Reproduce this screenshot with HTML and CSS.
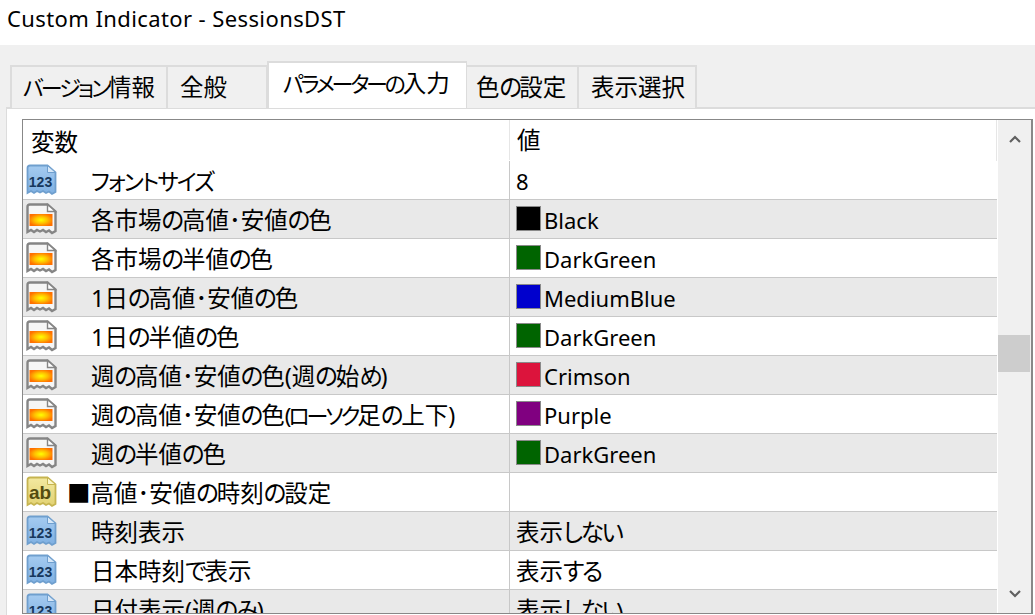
FILE: index.html
```html
<!DOCTYPE html>
<html lang="ja">
<head>
<meta charset="utf-8">
<title>Custom Indicator - SessionsDST</title>
<link rel="stylesheet" href="styles.css">
</head>
<body>
<svg class="defs" width="0" height="0" aria-hidden="true">
  <defs>
    <path id="doc" d="M2.5 4 Q2.5 1.5 5 1.5 H22.5 L30.5 8.5 V28 L27 30 L24 27.5 L21 29 L18 27 L15 28.5 L12 27 L9 29 L6 27 L2.5 29 Z"/>
    <radialGradient id="heat" cx="50%" cy="50%" r="55%">
      <stop offset="0" stop-color="#ffff00"/>
      <stop offset="0.5" stop-color="#ffc000"/>
      <stop offset="1" stop-color="#ff7000"/>
    </radialGradient>
    <linearGradient id="blue" x1="0" y1="0" x2="0" y2="1">
      <stop offset="0" stop-color="#a5cbf0"/>
      <stop offset="1" stop-color="#7fb0e2"/>
    </linearGradient>
    <linearGradient id="gold" x1="0" y1="0" x2="0" y2="1">
      <stop offset="0" stop-color="#f3e9a0"/>
      <stop offset="1" stop-color="#e2d273"/>
    </linearGradient>
    <symbol id="i-num" viewBox="0 0 33 33">
      <use href="#doc" fill="url(#blue)" stroke="#6f9fce" stroke-width="1.8"/>
      <path d="M22.5 1.5 V8.5 H30.5 Z" fill="#d6e7f8" stroke="#6f9fce"/>
      <text x="15.5" y="23" class="icon-num">123</text>
    </symbol>
    <symbol id="i-color" viewBox="0 0 33 33">
      <use href="#doc" fill="#f6f6f6" stroke="#858585" stroke-width="2.4"/>
      <path d="M22.5 1.5 V8.5 H30.5 Z" fill="#fff" stroke="#858585" stroke-width="1.4"/>
      <rect x="4.5" y="11" width="23" height="12" fill="url(#heat)"/>
    </symbol>
    <symbol id="i-str" viewBox="0 0 33 33">
      <use href="#doc" fill="url(#gold)" stroke="#c6b450" stroke-width="1.8"/>
      <path d="M22.5 1.5 V8.5 H30.5 Z" fill="#faf5c8" stroke="#c6b450"/>
      <text x="15" y="23" class="icon-ab">ab</text>
    </symbol>
  </defs>
</svg>

<header class="titlebar">Custom Indicator - SessionsDST</header>

<main class="dialog">
  <nav class="tabs">
    <div class="tab tab-version"><span class="t">バージョン</span>情報</div>
    <div class="tab tab-general">全般</div>
    <div class="tab tab-active"><span class="t t-wide">パラメーターの</span>入力</div>
    <div class="tab tab-color">色<span class="h">の</span>設定</div>
    <div class="tab tab-visual">表示選択</div>
  </nav>

  <section class="panel">
    <div class="grid">
      <div class="list">
        <div class="row head"><div class="name">変数</div><div class="val">値</div></div>
        <div class="row"><svg class="ico"><use href="#i-num"/></svg><div class="name"><span class="k">フォントサイズ</span></div><div class="val"><span class="lat">8</span></div></div>
        <div class="row alt"><svg class="ico"><use href="#i-color"/></svg><div class="name">各市場<span class="h">の</span>高値･安値<span class="h">の</span>色</div><div class="val"><span class="sw sw-black"></span><span class="lat">Black</span></div></div>
        <div class="row"><svg class="ico"><use href="#i-color"/></svg><div class="name">各市場<span class="h">の</span>半値<span class="h">の</span>色</div><div class="val"><span class="sw sw-green"></span><span class="lat">DarkGreen</span></div></div>
        <div class="row alt"><svg class="ico"><use href="#i-color"/></svg><div class="name">1日<span class="h">の</span>高値･安値<span class="h">の</span>色</div><div class="val"><span class="sw sw-blue"></span><span class="lat">MediumBlue</span></div></div>
        <div class="row"><svg class="ico"><use href="#i-color"/></svg><div class="name">1日<span class="h">の</span>半値<span class="h">の</span>色</div><div class="val"><span class="sw sw-green"></span><span class="lat">DarkGreen</span></div></div>
        <div class="row alt"><svg class="ico"><use href="#i-color"/></svg><div class="name">週<span class="h">の</span>高値･安値<span class="h">の</span>色(週<span class="h">の</span>始<span class="h">め</span>)</div><div class="val"><span class="sw sw-crimson"></span><span class="lat">Crimson</span></div></div>
        <div class="row"><svg class="ico"><use href="#i-color"/></svg><div class="name">週<span class="h">の</span>高値･安値<span class="h">の</span>色<span class="k2">(ローソク</span>足<span class="h">の</span>上下)</div><div class="val"><span class="sw sw-purple"></span><span class="lat">Purple</span></div></div>
        <div class="row alt"><svg class="ico"><use href="#i-color"/></svg><div class="name">週<span class="h">の</span>半値<span class="h">の</span>色</div><div class="val"><span class="sw sw-green"></span><span class="lat">DarkGreen</span></div></div>
        <div class="row"><svg class="ico"><use href="#i-str"/></svg><div class="name name-section">■高値･安値<span class="h">の</span>時刻<span class="h">の</span>設定</div><div class="val"></div></div>
        <div class="row alt"><svg class="ico"><use href="#i-num"/></svg><div class="name">時刻表示</div><div class="val">表示<span class="h">しない</span></div></div>
        <div class="row"><svg class="ico"><use href="#i-num"/></svg><div class="name">日本時刻<span class="h">で</span>表示</div><div class="val">表示<span class="h">する</span></div></div>
        <div class="row alt"><svg class="ico"><use href="#i-num"/></svg><div class="name">日付表示(週<span class="h">の</span><span class="h">み</span>)</div><div class="val">表示<span class="h">しない</span></div></div>
      </div>
      <div class="scrollbar">
        <svg class="arrow" viewBox="0 0 12 8"><path d="M1 7 L6 2 L11 7" fill="none" stroke="#606060" stroke-width="2.2"/></svg>
        <div class="track"><div class="thumb"></div></div>
        <svg class="arrow" viewBox="0 0 12 8"><path d="M1 1 L6 6 L11 1" fill="none" stroke="#606060" stroke-width="2.2"/></svg>
      </div>
    </div>
  </section>
</main>
</body>
</html>
```

FILE: styles.css
```css
* { box-sizing: border-box; }
html, body { margin: 0; padding: 0; height: 100%; overflow: hidden; }
body {
  width: 1035px;
  height: 615px;
  background: #f0f0f0;
  color: #000;
  font-family: "Noto Sans", "Noto Sans CJK JP", sans-serif;
  font-size: 23.5px;
  font-feature-settings: "palt";
  display: flex;
  flex-direction: column;
}
.defs { position: absolute; }

.h { letter-spacing: -2.2px; }
.k { font-size: 22.5px; letter-spacing: -1.8px; }
.k2 { font-size: 22px; letter-spacing: -3px; }
.t { font-size: 22px; letter-spacing: -2.9px; }
.t-wide { letter-spacing: -3.2px; }
.lat { font-size: 22px; }

.titlebar {
  height: 45px;
  flex: none;
  background: #fff;
  padding: 3px 0 0 7px;
  line-height: 30px;
  font-size: 22px;
  letter-spacing: 0.4px;
}

.dialog { flex: 1; display: flex; flex-direction: column; min-height: 0; padding-left: 6px; }

.tabs { height: 63px; flex: none; display: flex; align-items: flex-end; padding-left: 4px; position: relative; z-index: 1; }
.tab {
  height: 43px;
  background: #f0f0f0;
  border: 2px solid #dcdcdc;
  border-right-width: 1px;
  border-bottom: 0;
  padding-left: 11px;
  line-height: 40px;
  white-space: nowrap;
}
.tab-version { width: 157px; }
.tab-general { width: 100px; padding-left: 12px; border-left-width: 1px; }
.tab-active {
  width: 200px;
  height: 47px;
  background: #fff;
  padding-left: 14px;
  line-height: 41px;
}
.tab-color { width: 111px; border-left: 0; padding-left: 9px; }
.tab-color .h { letter-spacing: -3px; }
.tab-visual { width: 119px; border-left-width: 1px; padding-left: 12px; border-right-width: 2px; }

.panel {
  flex: 1;
  min-height: 0;
  background: #fff;
  border-top: 2px solid #dcdcdc;
  border-left: 1px solid #dcdcdc;
  margin-top: -1px;
  padding: 10px 2px 1px 15px;
}

.grid {
  height: 495px;
  border: 1px solid #888;
  border-right-width: 2px;
  display: flex;
  overflow: hidden;
}
.list { width: 974px; flex: none; overflow: hidden; }

.row {
  display: flex;
  height: 39px;
  align-items: stretch;
  border-bottom: 1px solid #c8c8c8;
  line-height: 40px;
  position: relative;
}
.row.alt { background: #e9e9e9; }
.row.head { height: 41px; border-bottom: 0; border-right: 1px solid #e6e6e6; line-height: 44px; padding-bottom: 1px; }

.ico { width: 33px; height: 33px; flex: none; margin: 3px 0 0 2px; }
.name { width: 451px; flex: none; padding-left: 33px; white-space: nowrap; }
.name-section { padding-left: 9px; }
.row.head .name { width: 486px; padding-left: 8px; }
.val {
  flex: 1;
  display: flex;
  align-items: center;
  border-left: 1px solid #c8c8c8;
  padding: 1px 0 0 6px;
  white-space: nowrap;
}
.row.head .val { border-left-color: #e6e6e6; padding-left: 7px; padding-top: 0; }

.sw { width: 25px; height: 25px; border: 1px solid #8a8a8a; margin: -2px 3px 0 0; flex: none; }
.sw-black { background: #000; }
.sw-green { background: #006400; }
.sw-blue { background: #0000cd; }
.sw-crimson { background: #dc143c; }
.sw-purple { background: #800080; }

.icon-num, .icon-ab {
  font-family: "Liberation Sans", sans-serif;
  font-weight: 700;
  text-anchor: middle;
}
.icon-num { font-size: 14px; fill: #17375c; }
.icon-ab { font-size: 19px; fill: #544c10; }

.scrollbar {
  flex: 1;
  margin-left: 1px;
  background: #f0f0f0;
  display: flex;
  flex-direction: column;
  align-items: center;
}
.arrow { width: 12px; height: 8px; flex: none; margin: 15px 0; }
.track { flex: 1; width: 100%; padding-top: 177px; }
.thumb { width: 32px; height: 37px; background: #cdcdcd; }
```
